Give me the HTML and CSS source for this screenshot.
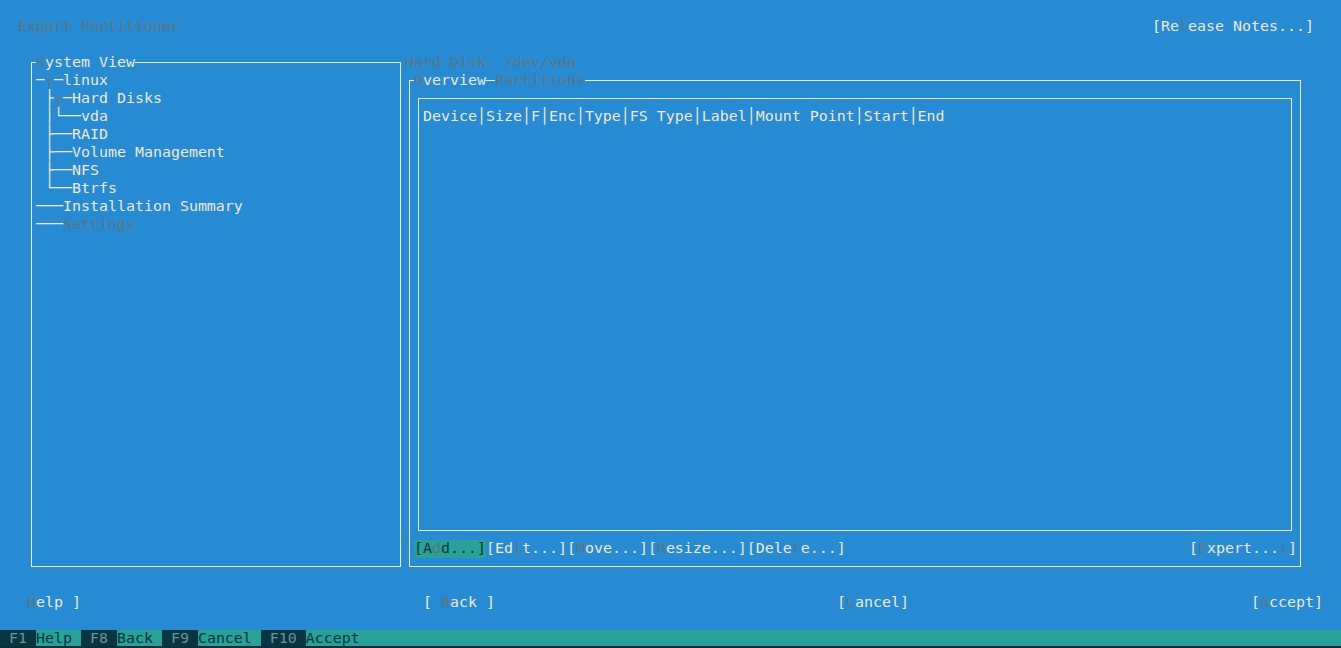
FILE: index.html
```html
<!DOCTYPE html>
<html>
<head>
<meta charset="utf-8">
<link rel="stylesheet" href="styles.css">
</head>
<body>
<div class="screen">
  <header class="topbar">
    <span class="txt dim">Expert Partitioner</span>
    <span class="btn">[Re<span class="dim">l</span>ease Notes...]</span>
  </header>
  <main class="workspace">
    <section class="frame tree-frame">
      <div class="frame-title"><span class="ttl"><span class="dim">S</span>ystem View</span></div>
      <div class="tree">
        <div class="row">─<span class="dim">┬</span>─linux</div>
        <div class="row"> ├<span class="dim">┬</span>─Hard Disks</div>
        <div class="row"> │└──vda</div>
        <div class="row"> ├──RAID</div>
        <div class="row"> ├──Volume Management</div>
        <div class="row"> ├──NFS</div>
        <div class="row"> └──Btrfs</div>
        <div class="row">───Installation Summary</div>
        <div class="row">───<span class="dim">Settings</span></div>
      </div>
    </section>
    <section class="disk">
      <div class="txt dim disk-title">Hard Disk: /dev/vda</div>
      <div class="frame overview">
        <div class="frame-title"><span class="ttl"><span class="dim">O</span>verview</span><span class="ttl dim">Partitions</span></div>
        <div class="frame table-frame">
          <div class="thead">Device│Size│F│Enc│Type│FS Type│Label│Mount Point│Start│End</div>
        </div>
        <div class="actions">
          <div class="group"><span class="btn focus">[A<span class="hk">d</span>d...]</span><span class="btn">[Ed<span class="dim">i</span>t...]</span><span class="btn">[<span class="dim">M</span>ove...]</span><span class="btn">[<span class="dim">R</span>esize...]</span><span class="btn">[Dele<span class="dim">t</span>e...]</span></div>
          <span class="btn">[<span class="dim">E</span>xpert...<span class="dim">↓</span>]</span>
        </div>
      </div>
    </section>
  </main>
  <div class="dialog-buttons">
    <span class="btn"><span class="dim">H</span>elp ]</span>
    <span class="btn">[ <span class="dim">B</span>ack ]</span>
    <span class="btn">[<span class="dim">C</span>ancel]</span>
    <span class="btn">[<span class="dim">A</span>ccept]</span>
  </div>
  <footer class="fkeys"><span class="key"> F1 </span><span class="lbl">Help </span><span class="key"> F8 </span><span class="lbl">Back </span><span class="key"> F9 </span><span class="lbl">Cancel </span><span class="key"> F10 </span><span class="lbl">Accept</span></footer>
</div>
</body>
</html>
```
FILE: styles.css
```css
* { box-sizing: border-box; }
html, body { margin: 0; padding: 0; }
body { background: #268bd2; }

.screen {
  width: 1341px;
  height: 648px;
  display: flex;
  flex-direction: column;
  font-family: "DejaVu Sans Mono", "Liberation Mono", monospace;
  font-size: 14.95px;
  line-height: 18px;
  color: #eee8d5;
  overflow: hidden;
  background: #268bd2;
}

.txt, .btn, .row, .ttl, .thead, .key, .lbl {
  white-space: pre;
  line-height: 16px;
  padding-bottom: 2px;
}

.dim { color: #5f7580; }

.topbar {
  margin-top: 18px;
  height: 18px;
  display: flex;
  justify-content: space-between;
  padding: 0 27px 0 18px;
}

.workspace {
  margin-top: 18px;
  height: 522px;
  display: flex;
  align-items: flex-start;
}

.frame { border: 1px solid #eee8d5; }

.frame-title {
  display: flex;
  gap: 9px;
  height: 18px;
  margin: -9px 0 0 4px;
}
.ttl { background: #268bd2; }

.tree-frame {
  margin: 8px 0 0 31px;
  width: 370px;
  height: 505px;
  flex: none;
}
.tree { padding-left: 4px; }
.row { height: 18px; }

.disk {
  margin-left: 4px;
  width: 900px;
  display: flex;
  flex-direction: column;
}
.disk-title { height: 18px; }

.overview {
  margin: 8px 0 0 4px;
  width: 892px;
  height: 487px;
}

.table-frame {
  margin: 8px 8px 0 8px;
  width: 874px;
  height: 433px;
  padding: 9px 0 0 4px;
}
.thead { height: 18px; }

.actions {
  margin-top: 9px;
  height: 18px;
  display: flex;
  justify-content: space-between;
  padding: 0 3px 0 4px;
}
.group { display: flex; }
.focus { background: #2aa198; color: #073642; }
.focus .hk { color: #55757c; }

.dialog-buttons {
  margin-top: 18px;
  height: 18px;
  display: flex;
  justify-content: space-between;
  padding: 0 18px 0 27px;
}

.fkeys {
  margin-top: 18px;
  height: 18px;
  display: flex;
  background: #2aa198;
  box-shadow: inset 0 -2px 0 #0b2f3a;
}
.key { background: #073642; color: #6f9196; box-shadow: inset 0 -2px 0 #0b2f3a; }
.lbl { color: #073642; }
```
